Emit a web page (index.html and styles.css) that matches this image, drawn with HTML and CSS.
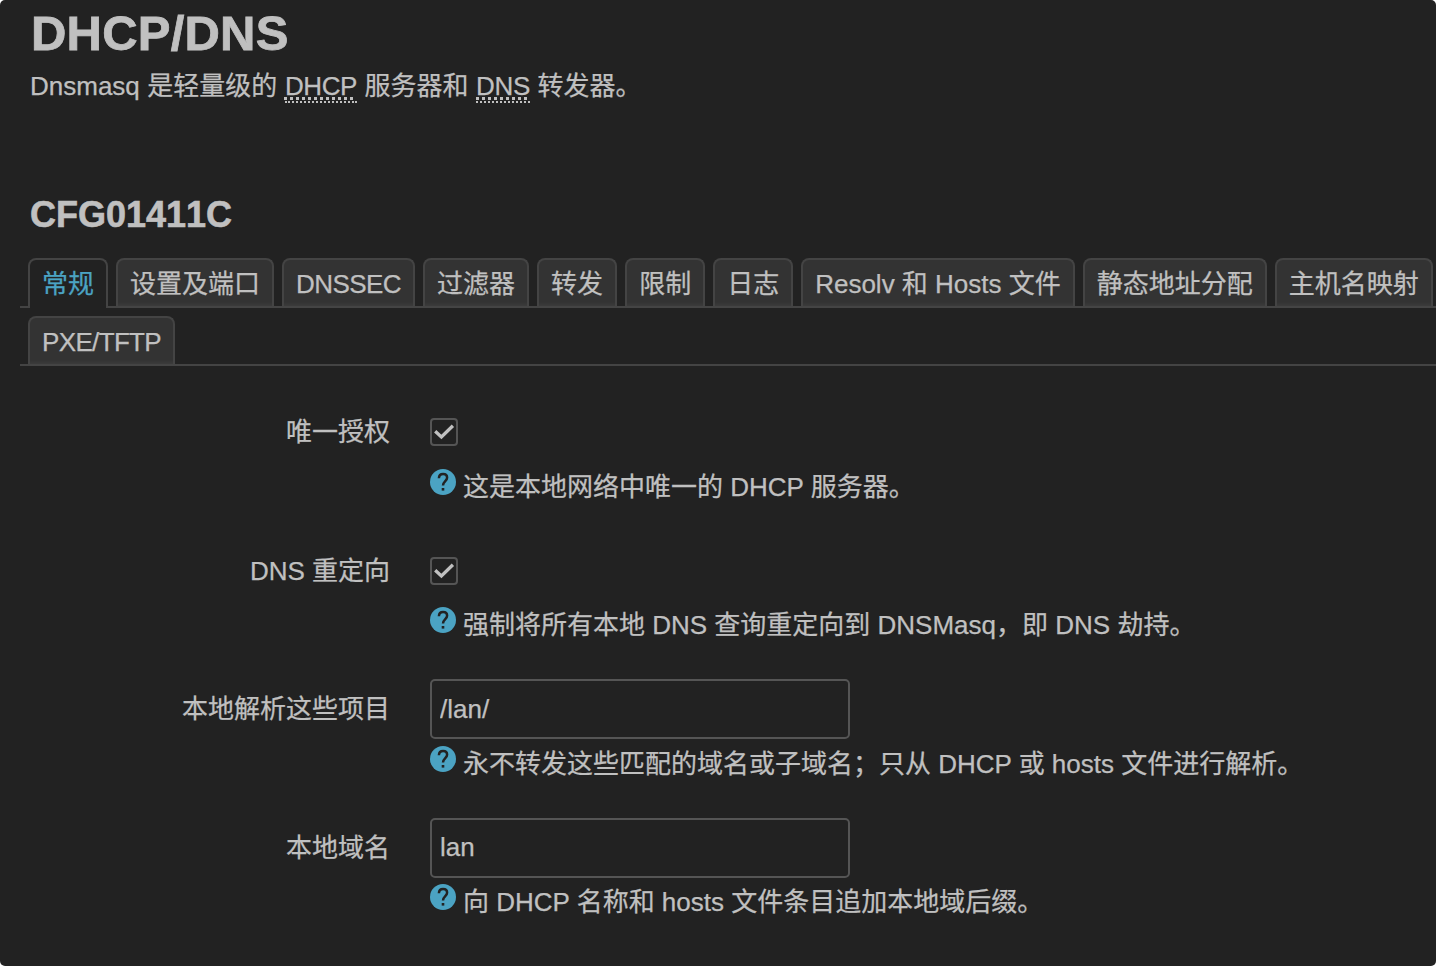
FILE: index.html
```html
<!DOCTYPE html>
<html lang="zh-CN">
<head>
<meta charset="utf-8">
<title>DHCP/DNS</title>
<link rel="stylesheet" href="styles.css">
</head>
<body>
<svg class="defs" width="0" height="0" aria-hidden="true">
  <symbol id="help" viewBox="0 0 26 26"><circle cx="13" cy="13" r="13"/><path d="M8.900 9.200C9 6.600 10.700 5.100 13.100 5.100C15.500 5.100 17.100 6.600 17.100 8.800C17.100 12 13 12.300 13 16.600" fill="none" stroke="#222" stroke-width="2.500"/><rect x="11.700" y="19" width="2.600" height="2.600" fill="#222"/></symbol>
  <symbol id="check" viewBox="0 0 24 24"><path d="M3.200 11.300L9.400 17L20.900 5.800" fill="none" stroke="#c0c0c0" stroke-width="3.300"/></symbol>
</svg>
<main class="page">
  <h1 class="title">DHCP/DNS</h1>
  <p class="intro">Dnsmasq 是轻量级的 <abbr class="term term-dhcp">DHCP</abbr> 服务器和 <abbr class="term term-dns">DNS</abbr> 转发器。</p>
  <h2 class="section">CFG01411C</h2>
  <ul class="tabs">
    <li class="tab active">常规</li>
    <li class="tab">设置及端口</li>
    <li class="tab"><span class="dnssec">DNSSEC</span></li>
    <li class="tab">过滤器</li>
    <li class="tab">转发</li>
    <li class="tab">限制</li>
    <li class="tab">日志</li>
    <li class="tab">Resolv 和 Hosts 文件</li>
    <li class="tab">静态地址分配</li>
    <li class="tab">主机名映射</li>
  </ul>
  <ul class="tabs second">
    <li class="tab"><span class="pxe">PXE/TFTP</span></li>
  </ul>
  <div class="form">
    <div class="row">
      <div class="label">唯一授权</div>
      <div class="field"><span class="checkbox"><svg class="tick"><use href="#check"/></svg></span></div>
      <div class="help"><svg class="icon"><use href="#help"/></svg><span>这是本地网络中唯一的 DHCP 服务器。</span></div>
    </div>
    <div class="row">
      <div class="label">DNS 重定向</div>
      <div class="field"><span class="checkbox"><svg class="tick"><use href="#check"/></svg></span></div>
      <div class="help"><svg class="icon"><use href="#help"/></svg><span>强制将所有本地 DNS 查询重定向到 DNSMasq，即 DNS 劫持。</span></div>
    </div>
    <div class="row">
      <div class="label">本地解析这些项目</div>
      <div class="field"><input class="input" type="text" value="/lan/"></div>
      <div class="help"><svg class="icon"><use href="#help"/></svg><span>永不转发这些匹配的域名或子域名；只从 DHCP 或 hosts 文件进行解析。</span></div>
    </div>
    <div class="row">
      <div class="label">本地域名</div>
      <div class="field"><input class="input" type="text" value="lan"></div>
      <div class="help"><svg class="icon"><use href="#help"/></svg><span>向 DHCP 名称和 hosts 文件条目追加本地域后缀。</span></div>
    </div>
  </div>
</main>
</body>
</html>
```
FILE: styles.css
```css
* { box-sizing: border-box; }
body {
  margin: 0;
  background: #fff;
  color: #c0c0c0;
  font: 26px/36px "Liberation Sans", "Noto Sans CJK SC", sans-serif;
  -webkit-text-stroke: 0.25px currentColor;
}
.defs { display: block; }
.page {
  height: 966px;
  overflow: hidden;
  padding: 3px 0 0 20px;
  background: #222;
  border-radius: 5px;
  white-space: nowrap;
}
.title {
  margin: 0;
  padding-left: 11px;
  font-size: 49px;
  line-height: 60px;
  letter-spacing: 0.2px;
  -webkit-text-stroke-width: 0.8px;
}
.intro {
  margin: 5px 0 0;
  padding-left: 10px;
  word-spacing: 0.3px;
}
.term {
  display: inline-block;
  height: 34px;
  line-height: 34px;
  border-bottom: 2px dotted #c0c0c0;
  text-decoration: underline dotted #c0c0c0 3px;
  text-underline-offset: 2px;
}
.term-dhcp { letter-spacing: -0.4px; }
.term-dns { letter-spacing: -0.3px; }
.section {
  margin: 89px 0 0;
  padding-left: 10px;
  font-size: 36px;
  line-height: 44px;
  font-kerning: none;
  -webkit-text-stroke-width: 0.6px;
}
.tabs {
  display: flex;
  gap: 8px;
  margin: 21px 0 0;
  padding: 0 0 0 8px;
  list-style: none;
  border-bottom: 2px solid #444;
}
.tabs.second { margin-top: 8px; }
.tab {
  flex: none;
  height: 48px;
  padding: 0 12px;
  line-height: 48px;
  border: 2px solid #444;
  border-bottom: 0;
  border-radius: 8px 8px 0 0;
  background: linear-gradient(#333 42px, #3b3b3b);
}
.tab.active {
  height: 50px;
  margin-bottom: -2px;
  color: #4ba3c3;
  background: #222;
}
.dnssec { letter-spacing: -0.55px; }
.pxe { letter-spacing: -0.65px; }
.form { padding-top: 36px; }
.row {
  display: grid;
  grid-template: 60px 78.6px / 370px 1fr;
  column-gap: 40px;
}
.label {
  text-align: right;
  line-height: 60px;
}
.field {
  display: flex;
  align-items: center;
}
.checkbox {
  display: block;
  width: 28px;
  height: 28px;
  border: 2px solid #555;
  border-radius: 4px;
}
.tick {
  display: block;
  width: 24px;
  height: 24px;
}
.input {
  width: 420px;
  height: 60px;
  padding: 0 8px;
  color: #c0c0c0;
  font: inherit;
  background: transparent;
  border: 2px solid #555;
  border-radius: 5px;
  outline: 0;
}
.help {
  grid-column: 2;
  display: flex;
  align-items: flex-start;
  gap: 7px;
  margin-top: -0.4px;
  line-height: 50px;
}
.icon {
  width: 26px;
  height: 26px;
  margin-top: 7px;
  fill: #4ba3c3;
}
```
